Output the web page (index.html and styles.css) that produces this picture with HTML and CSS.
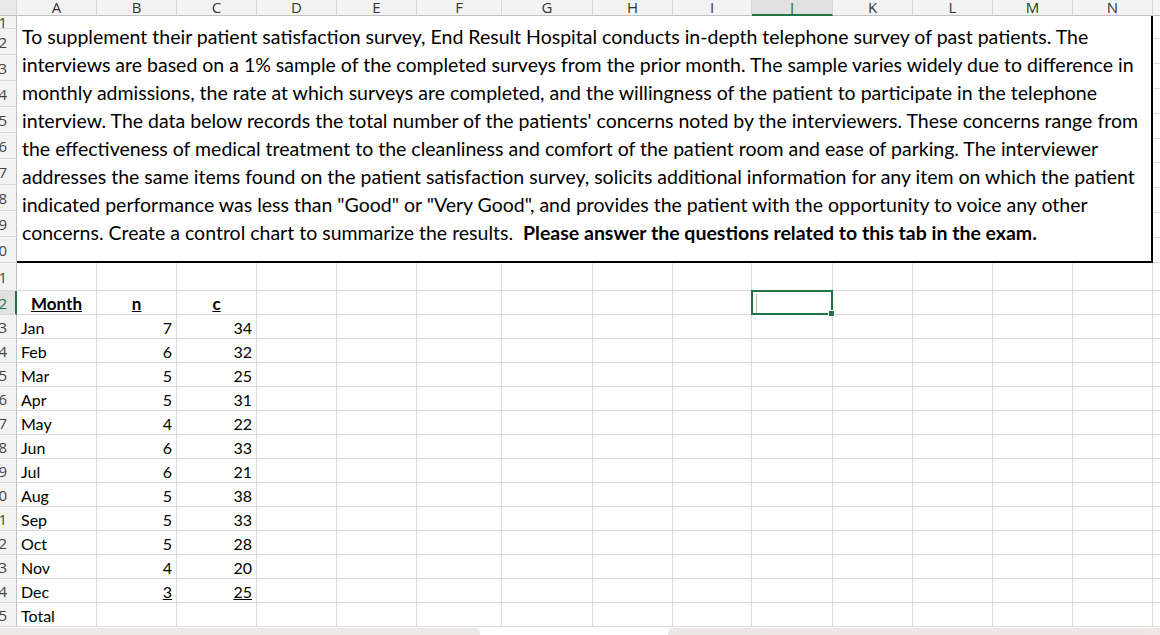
FILE: index.html
```html
<!DOCTYPE html>
<html lang="en">
<head>
    <meta charset="UTF-8">
    <title>Control chart - c chart</title>
    <link rel="stylesheet" href="styles.css">
</head>
<body>
    <div class="sheet">
        <div class="colheads">
            <div class="corner"></div>
            <div class="ch">A</div><div class="ch">B</div><div class="ch">C</div><div class="ch">D</div>
            <div class="ch">E</div><div class="ch">F</div><div class="ch">G</div><div class="ch">H</div>
            <div class="ch">I</div><div class="ch sel">J</div><div class="ch">K</div><div class="ch">L</div>
            <div class="ch">M</div><div class="ch">N</div><div class="ch">O</div>
        </div>

        <div class="top">
            <div class="rhs">
                <div class="rh first">1</div>
                <div class="rh mid">2</div>
                <div class="rh mid">3</div>
                <div class="rh mid">4</div>
                <div class="rh mid">5</div>
                <div class="rh mid">6</div>
                <div class="rh mid">7</div>
                <div class="rh mid">8</div>
                <div class="rh mid">9</div>
                <div class="rh mid">10</div>
            </div>
            <div class="note">
                <p class="note-text">To supplement their patient satisfaction survey, End Result Hospital conducts in-depth telephone survey of past patients. The<br>interviews are based on a 1% sample of the completed surveys from the prior month. The sample varies widely due to difference in<br>monthly admissions, the rate at which surveys are completed, and the willingness of the patient to participate in the telephone<br>interview. The data below records the total number of the patients' concerns noted by the interviewers. These concerns range from<br>the effectiveness of medical treatment to the cleanliness and comfort of the patient room and ease of parking. The interviewer<br>addresses the same items found on the patient satisfaction survey, solicits additional information for any item on which the patient<br>indicated performance was less than "Good" or "Very Good", and provides the patient with the opportunity to voice any other<br>concerns. Create a control chart to summarize the results.&nbsp; <b>Please answer the questions related to this tab in the exam.</b></p>
            </div>
            <div class="spill">
                <div class="c first"></div>
                <div class="c mid"></div><div class="c mid"></div><div class="c mid"></div>
                <div class="c mid"></div><div class="c mid"></div><div class="c mid"></div>
                <div class="c mid"></div><div class="c mid"></div><div class="c mid"></div>
            </div>
        </div>

        <div class="row tall">
            <div class="rh">11</div>
            <div class="c"></div><div class="c"></div><div class="c"></div><div class="c"></div><div class="c"></div>
            <div class="c"></div><div class="c"></div><div class="c"></div><div class="c"></div><div class="c"></div>
            <div class="c"></div><div class="c"></div><div class="c"></div><div class="c"></div><div class="c"></div>
        </div>
        <div class="row">
            <div class="rh sel">12</div>
            <div class="c head">Month</div><div class="c head">n</div><div class="c head">c</div>
            <div class="c"></div><div class="c"></div><div class="c"></div><div class="c"></div><div class="c"></div>
            <div class="c"></div><div class="c active"><span class="caret"></span></div><div class="c"></div><div class="c"></div>
            <div class="c"></div><div class="c"></div><div class="c"></div>
        </div>
        <div class="row">
            <div class="rh">13</div>
            <div class="c">Jan</div><div class="c num">7</div><div class="c num">34</div>
            <div class="c"></div><div class="c"></div><div class="c"></div><div class="c"></div><div class="c"></div><div class="c"></div>
            <div class="c"></div><div class="c"></div><div class="c"></div><div class="c"></div><div class="c"></div><div class="c"></div>
        </div>
        <div class="row">
            <div class="rh">14</div>
            <div class="c">Feb</div><div class="c num">6</div><div class="c num">32</div>
            <div class="c"></div><div class="c"></div><div class="c"></div><div class="c"></div><div class="c"></div><div class="c"></div>
            <div class="c"></div><div class="c"></div><div class="c"></div><div class="c"></div><div class="c"></div><div class="c"></div>
        </div>
        <div class="row">
            <div class="rh">15</div>
            <div class="c">Mar</div><div class="c num">5</div><div class="c num">25</div>
            <div class="c"></div><div class="c"></div><div class="c"></div><div class="c"></div><div class="c"></div><div class="c"></div>
            <div class="c"></div><div class="c"></div><div class="c"></div><div class="c"></div><div class="c"></div><div class="c"></div>
        </div>
        <div class="row">
            <div class="rh">16</div>
            <div class="c">Apr</div><div class="c num">5</div><div class="c num">31</div>
            <div class="c"></div><div class="c"></div><div class="c"></div><div class="c"></div><div class="c"></div><div class="c"></div>
            <div class="c"></div><div class="c"></div><div class="c"></div><div class="c"></div><div class="c"></div><div class="c"></div>
        </div>
        <div class="row">
            <div class="rh">17</div>
            <div class="c">May</div><div class="c num">4</div><div class="c num">22</div>
            <div class="c"></div><div class="c"></div><div class="c"></div><div class="c"></div><div class="c"></div><div class="c"></div>
            <div class="c"></div><div class="c"></div><div class="c"></div><div class="c"></div><div class="c"></div><div class="c"></div>
        </div>
        <div class="row">
            <div class="rh">18</div>
            <div class="c">Jun</div><div class="c num">6</div><div class="c num">33</div>
            <div class="c"></div><div class="c"></div><div class="c"></div><div class="c"></div><div class="c"></div><div class="c"></div>
            <div class="c"></div><div class="c"></div><div class="c"></div><div class="c"></div><div class="c"></div><div class="c"></div>
        </div>
        <div class="row">
            <div class="rh">19</div>
            <div class="c">Jul</div><div class="c num">6</div><div class="c num">21</div>
            <div class="c"></div><div class="c"></div><div class="c"></div><div class="c"></div><div class="c"></div><div class="c"></div>
            <div class="c"></div><div class="c"></div><div class="c"></div><div class="c"></div><div class="c"></div><div class="c"></div>
        </div>
        <div class="row">
            <div class="rh">20</div>
            <div class="c">Aug</div><div class="c num">5</div><div class="c num">38</div>
            <div class="c"></div><div class="c"></div><div class="c"></div><div class="c"></div><div class="c"></div><div class="c"></div>
            <div class="c"></div><div class="c"></div><div class="c"></div><div class="c"></div><div class="c"></div><div class="c"></div>
        </div>
        <div class="row">
            <div class="rh">21</div>
            <div class="c">Sep</div><div class="c num">5</div><div class="c num">33</div>
            <div class="c"></div><div class="c"></div><div class="c"></div><div class="c"></div><div class="c"></div><div class="c"></div>
            <div class="c"></div><div class="c"></div><div class="c"></div><div class="c"></div><div class="c"></div><div class="c"></div>
        </div>
        <div class="row">
            <div class="rh">22</div>
            <div class="c">Oct</div><div class="c num">5</div><div class="c num">28</div>
            <div class="c"></div><div class="c"></div><div class="c"></div><div class="c"></div><div class="c"></div><div class="c"></div>
            <div class="c"></div><div class="c"></div><div class="c"></div><div class="c"></div><div class="c"></div><div class="c"></div>
        </div>
        <div class="row">
            <div class="rh">23</div>
            <div class="c">Nov</div><div class="c num">4</div><div class="c num">20</div>
            <div class="c"></div><div class="c"></div><div class="c"></div><div class="c"></div><div class="c"></div><div class="c"></div>
            <div class="c"></div><div class="c"></div><div class="c"></div><div class="c"></div><div class="c"></div><div class="c"></div>
        </div>
        <div class="row">
            <div class="rh">24</div>
            <div class="c">Dec</div><div class="c num"><u>3</u></div><div class="c num"><u>25</u></div>
            <div class="c"></div><div class="c"></div><div class="c"></div><div class="c"></div><div class="c"></div><div class="c"></div>
            <div class="c"></div><div class="c"></div><div class="c"></div><div class="c"></div><div class="c"></div><div class="c"></div>
        </div>
        <div class="row">
            <div class="rh">25</div>
            <div class="c">Total</div><div class="c"></div><div class="c"></div>
            <div class="c"></div><div class="c"></div><div class="c"></div><div class="c"></div><div class="c"></div><div class="c"></div>
            <div class="c"></div><div class="c"></div><div class="c"></div><div class="c"></div><div class="c"></div><div class="c"></div>
        </div>

        <div class="bar">
            <div class="bar-left"></div>
            <div class="bar-gap"></div>
            <div class="bar-right"></div>
        </div>
    </div>
</body>
</html>
```

FILE: styles.css
```css
body, html {
    margin: 0;
    padding: 0;
    background-color: #fff;
    font-family: 'Lato', 'Liberation Sans', sans-serif;
    color: #000;
}
.sheet {
    width: 1160px;
    height: 635px;
    overflow: hidden;
}
.colheads, .row {
    display: grid;
    grid-template-columns: 17px 80px 80px 80px 80px 80px 85px 91px 80px 79px 81px 80px 80px 80px 80px 80px;
}
.corner, .ch {
    box-sizing: border-box;
    height: 16px;
    background-color: #f3f3f3;
    border-right: 1px solid #d6d6d6;
    border-bottom: 1px solid #c2c2c2;
}
.ch {
    font-family: 'Open Sans', 'Noto Sans', sans-serif;
    font-size: 15px;
    line-height: 14px;
    text-align: center;
    color: #333;
}
.ch.sel {
    background-color: #e1e1e1;
    color: #217346;
    border-bottom: 2px solid #217346;
}
.corner {
    background-color: #e9e9e9;
}
.rh {
    box-sizing: border-box;
    height: 24px;
    display: flex;
    justify-content: flex-end;
    align-items: center;
    padding-right: 9px;
    overflow: hidden;
    background-color: #f3f3f3;
    border-right: 1px solid #c2c2c2;
    border-bottom: 1px solid #d9d9d9;
    font-family: 'Open Sans', 'Noto Sans', sans-serif;
    font-size: 15px;
    color: #444;
}
.rh.sel {
    background-color: #e1e1e1;
    color: #217346;
    border-right: 2px solid #217346;
    padding-right: 8px;
}
.top {
    display: flex;
    height: 247px;
}
.rhs, .spill {
    display: flex;
    flex-direction: column;
    flex-shrink: 0;
}
.rhs {
    width: 17px;
}
.spill {
    width: 80px;
}
.first {
    height: 13px;
}
.rhs .mid, .spill .mid {
    height: 26px;
}
.note {
    box-sizing: border-box;
    width: 1136px;
    height: 247px;
    flex-shrink: 0;
    padding: 7px 0 0 5px;
    border-right: 2px solid #000;
    border-bottom: 2px solid #000;
    background-color: #fff;
}
.note-text {
    margin: 0;
    font-size: 19.5px;
    line-height: 28px;
    white-space: nowrap;
}
.c {
    box-sizing: border-box;
    height: 24px;
    padding: 0 4px;
    border-right: 1px solid #dadada;
    border-bottom: 1px solid #dadada;
    font-size: 16px;
    line-height: 25px;
    white-space: nowrap;
    overflow: hidden;
}
.row.tall .c, .row.tall .rh {
    height: 28px;
}
.c.num {
    text-align: right;
}
.c.head {
    text-align: center;
    font-weight: bold;
    font-size: 17px;
    text-decoration: underline;
}
.c.active {
    position: relative;
    overflow: visible;
}
.c.active::after {
    content: '';
    position: absolute;
    left: -1px;
    top: -1px;
    right: -1px;
    bottom: -1px;
    border: 2px solid #217346;
}
.c.active::before {
    content: '';
    position: absolute;
    right: -3px;
    bottom: -3px;
    width: 5px;
    height: 5px;
    background-color: #217346;
    border: 1px solid #fff;
    z-index: 1;
}
.caret {
    position: absolute;
    left: 4px;
    top: 3px;
    width: 1px;
    height: 19px;
    background-color: #bdbdbd;
}
.bar {
    display: flex;
    height: 7px;
    margin-top: 1px;
}
.bar-left {
    width: 480px;
    background-color: #ebe8e7;
    border-top-right-radius: 5px;
}
.bar-gap {
    width: 188px;
}
.bar-right {
    flex-grow: 1;
    background: linear-gradient(90deg, #ebe7e6, #efe6e6);
    border-top-left-radius: 5px;
}
```
